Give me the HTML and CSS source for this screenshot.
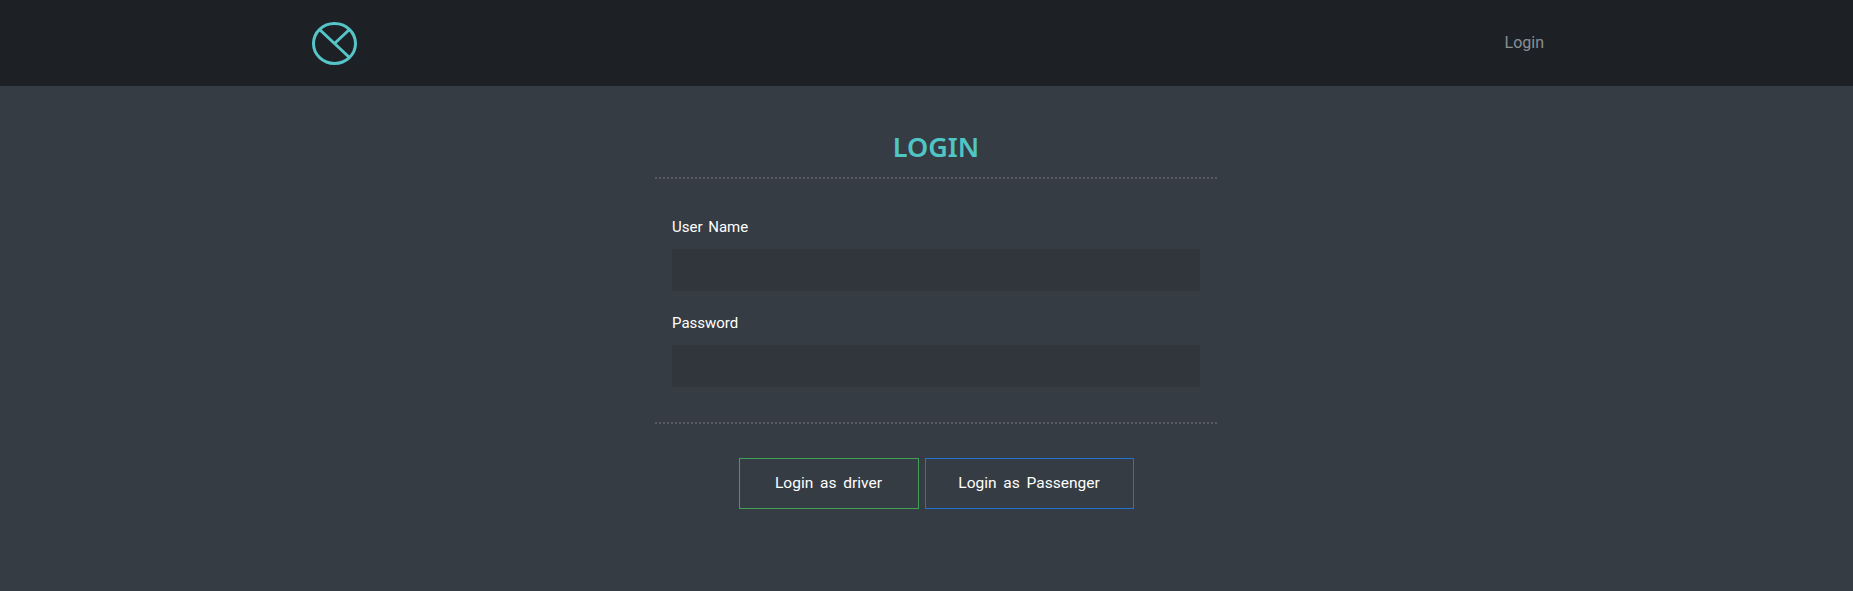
FILE: index.html
```html
<!DOCTYPE html>
<html lang="en">
<head>
  <meta charset="UTF-8" />
  <title>Login</title>
  <link rel="stylesheet" href="styles.css">
</head>
<body>

<header class="topbar">
  <div class="topbar-inner">
    <a class="logo" href="#">
      <svg width="45" height="43" viewBox="0 0 45 43" fill="none" stroke="#55c5c8" stroke-width="3">
        <ellipse cx="22.5" cy="21.5" rx="21" ry="20"/>
        <path d="M7 7 L38 36"/>
        <path d="M23 21 L38 7"/>
      </svg>
    </a>
    <a class="nav-link" href="#">Login</a>
  </div>
</header>

<div class="page">
  <main class="login-box">
    <h2 class="login-title">LOGIN</h2>

    <form class="login-form">
      <label for="user">User Name</label>
      <input id="user" type="text">
      <label for="pass">Password</label>
      <input id="pass" type="password">
    </form>

    <div class="login-actions">
      <button class="btn btn-driver" type="button">Login as driver</button>
      <button class="btn btn-passenger" type="button">Login as Passenger</button>
    </div>
  </main>
</div>

</body>
</html>
```

FILE: styles.css
```css
body { margin: 0; background: #363c44; color: #fff; font-family: Roboto, sans-serif; font-size: 16px; word-spacing: 2px; }
a { text-decoration: none; }
.topbar { background: #1d2126; height: 86px; padding-left: 3px; display: flex; justify-content: center; }
.topbar-inner { width: 1232px; display: flex; align-items: center; justify-content: space-between; }
.logo { display: flex; }
.nav-link { color: #8b8f94; font-size: 16px; padding-bottom: 1px; }
.page { display: flex; justify-content: center; padding-left: 19px; }
.login-box { width: 562px; }
.login-title { margin: 0; padding: 44px 0 13px; color: #4fc6c4; font-family: "Noto Sans", sans-serif; font-size: 27px; font-weight: 600; line-height: 34px; text-align: center; border-bottom: 2px dotted #565b62; }
.login-form { padding: 36px 17px 35px; border-bottom: 2px dotted #565b62; display: flex; flex-direction: column; }
.login-form label { font-size: 15px; line-height: 24px; margin-bottom: 10px; }
.login-form input { height: 42px; box-sizing: border-box; border: 0; background: #30363c; margin-bottom: 20px; padding: 0 12px; color: #fff; }
.login-form input:last-child { margin-bottom: 0; }
.login-actions { display: flex; justify-content: center; gap: 6px; padding-top: 34px; }
.btn { height: 51px; padding: 0 0 2px; background: transparent; color: #fff; font: inherit; font-size: 15.5px; word-spacing: 3px; border: 1px solid; cursor: pointer; }
.btn-driver { width: 180px; border-color: #41a055; }
.btn-passenger { width: 209px; border-color: #2272d0; }
```
